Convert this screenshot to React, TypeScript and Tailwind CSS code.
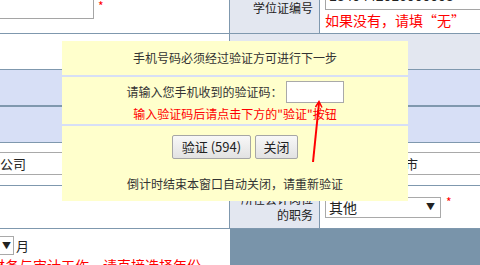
const LINE = 'border-[#7f98ae]';

function Popup() {
  return (
    <div className="absolute left-[62px] top-[41px] w-[346px] h-[160px] bg-[#ffffcc] flex flex-col text-[12px] leading-[16px] text-[#333]">
      {/* title */}
      <div className="h-[34px] flex items-center justify-center">手机号码必须经过验证方可进行下一步</div>
      <div className="h-[2px] bg-[#d7dff6]" />
      {/* code input */}
      <div className="h-[47px] flex flex-col items-center pt-[4px]">
        <div className="flex items-center">
          <span>请输入您手机收到的验证码：</span>
          <div className="ml-[3px] w-[58px] h-[22px] border border-[#a9a9a9] bg-white" />
        </div>
        <div className="mt-[4px] leading-[14px] text-[#ff0000]">输入验证码后请点击下方的"验证"按钮</div>
      </div>
      <div className="h-[2px] bg-[#d7dff6]" />
      {/* actions */}
      <div className="flex-1 flex flex-col items-center pt-[9px]">
        <div className="flex gap-[4px]">
          <button className="w-[79px] h-[24px] border border-[#a6a6a6] rounded-[2px] bg-linear-to-b from-[#f8f8f8] to-[#e2e2e2] text-[13px] text-[#222]">
            验证 (594)
          </button>
          <button className="w-[43px] h-[24px] border border-[#a6a6a6] rounded-[2px] bg-linear-to-b from-[#f8f8f8] to-[#e2e2e2] text-[13px] text-[#222]">
            关闭
          </button>
        </div>
        <div className="mt-[17px]">倒计时结束本窗口自动关闭，请重新验证</div>
      </div>
    </div>
  );
}

export default function App() {
  return (
    <div className="relative w-[480px] h-[265px] overflow-hidden bg-white text-[#222] font-['Noto_Sans_CJK_SC','Noto_Sans',sans-serif] flex flex-col">
      {/* row 1: 学位证编号 */}
      <div className={`flex h-[34px] shrink-0 border-b ${LINE}`}>
        <div className={`w-[230px] border-r ${LINE} flex items-start`}>
          <div className="w-[94px] h-[19px] border-r border-b border-[#a5a5a5]" />
          <span className="ml-[4px] mt-[1px] text-[12px] leading-[10px] text-[#ff0000]">*</span>
        </div>
        <div className={`w-[90px] border-r ${LINE} bg-[#e3e7f0] text-right pr-[6px] text-[12px] leading-[16px]`}>
          学位证编号
        </div>
        <div className="flex-1 flex flex-col">
          <div className="ml-[5px] h-[10px] border-l border-b border-[#a5a5a5] overflow-hidden">
            <div className="-mt-[12px] pl-[3px] text-[14px] leading-[16px] font-['Liberation_Sans',sans-serif]">1340442016000003</div>
          </div>
          <div className="ml-[5px] mt-[2px] text-[14px] leading-[16px] text-[#ff0000]">如果没有，请填“无”</div>
        </div>
      </div>

      {/* row 2 */}
      <div className={`flex h-[36px] shrink-0 border-b ${LINE}`}>
        <div className={`w-[230px] border-r ${LINE}`} />
        <div className="flex-1 bg-[#e3e7f0]" />
      </div>

      {/* rows 3-4: section bands */}
      <div className={`h-[37px] shrink-0 bg-[#d7dff6] border-b-2 ${LINE}`} />
      <div className={`h-[36px] shrink-0 bg-[#d7dff6] border-b ${LINE}`} />

      {/* row 5: company / city */}
      <div className={`h-[43px] shrink-0 border-b ${LINE} pt-[9px]`}>
        <div className="flex h-[23px] border-y border-[#a9a9a9] items-center text-[13px] leading-[16px]">
          <div className="w-[320px]">公司</div>
          <div className="ml-[85px]">市</div>
        </div>
      </div>

      {/* row 6: 岗位职务 */}
      <div className={`flex h-[43px] shrink-0 border-b ${LINE}`}>
        <div className={`w-[230px] border-r ${LINE}`} />
        <div className={`w-[90px] border-r ${LINE} bg-[#e3e7f0] flex flex-col justify-center items-end pr-[6px] text-[12px] leading-[16px]`}>
          <div>所在会计岗位</div>
          <div>的职务</div>
        </div>
        <div className="flex-1 flex items-center">
          <div className="ml-[5px] w-[116px] h-[21px] border border-[#a9a9a9] flex items-center justify-between pl-[3px] pr-[5px]">
            <span className="text-[14px] leading-[16px]">其他</span>
            <span className="text-[9px] leading-[10px]">▼</span>
          </div>
          <span className="ml-[5px] -mt-[10px] text-[12px] leading-[10px] text-[#ff0000]">*</span>
        </div>
      </div>

      {/* row 7 */}
      <div className="flex flex-1">
        <div className="w-[230px] flex flex-col pt-[7px]">
          <div className="flex items-center">
            <div className="w-[14px] h-[19px] border-y border-r border-[#a9a9a9] flex items-center justify-center text-[9px] leading-[10px]">▼</div>
            <span className="ml-[2px] text-[13px] leading-[16px]">月</span>
          </div>
          <div className="-ml-[9px] mt-[2px] whitespace-nowrap text-[14px] leading-[16px] text-[#ff0000]">财务与审计工作，请直接选择年份</div>
        </div>
        <div className="flex-1 bg-[#7994aa]" />
      </div>

      <Popup />

      {/* red pointer arrow */}
      <svg className="absolute left-0 top-0 pointer-events-none" width="480" height="265" viewBox="0 0 480 265">
        <line x1="313" y1="162" x2="319" y2="103" stroke="#ff0000" strokeWidth="2" />
        <polyline points="315.5,107 319,101.5 322,107.5" fill="none" stroke="#ff0000" strokeWidth="1.5" />
      </svg>
    </div>
  );
}
